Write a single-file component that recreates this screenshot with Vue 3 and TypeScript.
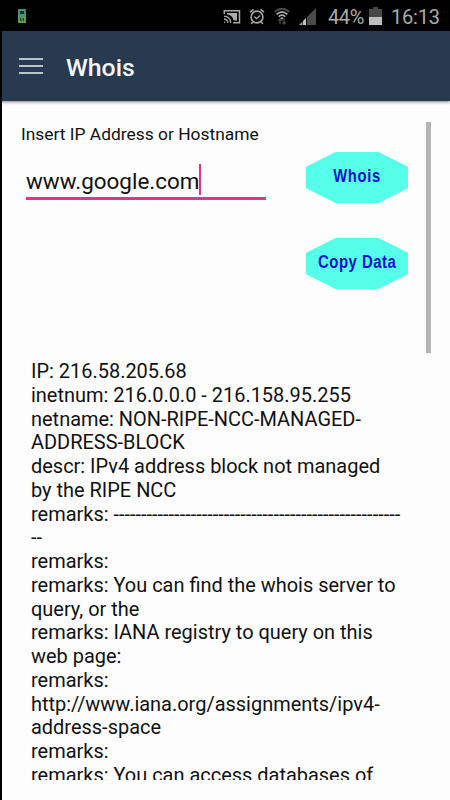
<script setup lang="ts">
import { ref } from "vue"

interface Action {
  label: string
  className: string
}

const host = ref("www.google.com")

const actions: Action[] = [
  { label: "Whois", className: "is-whois" },
  { label: "Copy Data", className: "is-copy" },
]

const lines: string[] = [
  "IP: 216.58.205.68",
  "inetnum: 216.0.0.0 - 216.158.95.255",
  "netname: NON-RIPE-NCC-MANAGED-",
  "ADDRESS-BLOCK",
  "descr: IPv4 address block not managed",
  "by the RIPE NCC",
  "remarks: " + "-".repeat(52),
  "--",
  "remarks:",
  "remarks: You can find the whois server to",
  "query, or the",
  "remarks: IANA registry to query on this",
  "web page:",
  "remarks:",
  "http://www.iana.org/assignments/ipv4-",
  "address-space",
  "remarks:",
  "remarks: You can access databases of",
]
</script>

<template>
  <div class="screen">
    <div class="status-bar">
      <svg class="notice-icon" viewBox="0 0 8 14" aria-hidden="true">
        <rect width="8" height="14" rx="0.5" fill="#419478" />
        <rect y="8" width="8" height="6" fill="#629a50" />
        <rect x="2" y="2" width="4" height="3" fill="#102e30" />
        <path d="M2 9h1.4v3H2zM4.6 9H6v3H4.6z" fill="#24451e" />
      </svg>
      <div class="status-icons">
        <svg class="cast-icon" viewBox="0 0 18 16" fill="none" stroke="#aaa" aria-hidden="true">
          <path d="M1.3 5V1.8h15.2v12H10" stroke-width="1.5" />
          <path d="M4 4h10v7.5h-3.5Q9.5 6 4 5.5z" fill="#aaa" stroke="none" />
          <path d="M1 7.2q6 .4 6.8 6.6M1 10q3.4.3 4 3.8" stroke-width="1.3" />
          <path d="M1 12.2l1.8 1.8H1z" fill="#aaa" stroke="none" />
        </svg>
        <svg class="alarm-icon" viewBox="0 0 16 17" fill="none" stroke="#a5a5a5" aria-hidden="true">
          <circle cx="8" cy="9" r="5.9" stroke-width="1.6" />
          <path d="M1 4.2L4.5 1.3M15 4.2l-3.5-2.9M3.8 13.8L2.2 16M12.2 13.8l1.6 2.2" stroke-width="1.5" />
          <path d="M5.2 8.6l2.3 2 3.7-3" stroke-width="1.3" />
        </svg>
        <svg class="wifi-icon" viewBox="0 0 16 18" fill="none" aria-hidden="true">
          <path d="M.7 4.8Q8-1.4 15.3 4.8" stroke="#4a4a4a" stroke-width="2" />
          <path d="M2.6 7.3Q8 2.4 13.4 7.3M4.7 9.6Q8 6.6 11.3 9.6" stroke="#b0b0b0" stroke-width="1.7" />
          <path d="M6.2 11Q8 9.6 9.8 11L8 12.8z" fill="#b0b0b0" />
          <path d="M6 17v-5M4.3 13.6L6 11.9l1.7 1.7M10 11.8v5M8.3 15.2L10 16.9l1.7-1.7" stroke="#484848" stroke-width="1.4" />
        </svg>
        <svg class="signal-icon" viewBox="0 0 17 17" aria-hidden="true">
          <path d="M17 0v17H8V9z" fill="#4a4a4a" />
          <path d="M7 10v7H4v-4z" fill="#c4c4c4" />
          <path d="M3.3 13.7V17H0z" fill="#aaa" />
        </svg>
        <span class="percent">44%</span>
        <svg class="battery-icon" viewBox="0 0 13 18" aria-hidden="true">
          <path d="M4 0h5v2h4v9H0V2h4z" fill="#484848" />
          <path d="M0 10h13v8H0z" fill="#bdbdbd" />
        </svg>
        <span class="clock">16:13</span>
      </div>
    </div>

    <header class="app-bar">
      <button class="menu" type="button" aria-label="Menu">
        <span /><span /><span />
      </button>
      <h1 class="title">Whois</h1>
    </header>

    <main class="content">
      <section class="query">
        <div class="field">
          <label class="field-label">Insert IP Address or Hostname</label>
          <div class="field-input">
            <span class="field-value">{{ host }}</span>
            <span class="caret" />
          </div>
        </div>
        <div class="actions">
          <button
            v-for="action in actions"
            :key="action.label"
            type="button"
            :class="['action', action.className]"
          >
            <span class="action-label">{{ action.label }}</span>
          </button>
        </div>
        <div class="scrollbar" />
      </section>

      <section class="result">
        <p v-for="(line, i) in lines" :key="i" class="result-line">{{ line }}</p>
      </section>
    </main>
  </div>
</template>

<style>
body {
  margin: 0;
  background: #000;
}
</style>

<style scoped>
.screen {
  box-sizing: border-box;
  display: flex;
  flex-direction: column;
  width: 450px;
  height: 800px;
  overflow: hidden;
  background: #fdfdfd;
  color: #111;
  font-family: Roboto, "Liberation Sans", sans-serif;
}
.status-bar {
  display: flex;
  flex-shrink: 0;
  justify-content: space-between;
  height: 31px;
  padding: 0 10px 0 18px;
  box-sizing: border-box;
  background: #000;
}
.notice-icon { width: 8px; height: 14px; margin-top: 9px; }
.status-icons {
  display: flex;
  align-items: flex-start;
  color: #aaa;
  font-size: 20px;
  line-height: 24px;
}
.cast-icon { width: 18px; height: 16px; margin: 9px 8px 0 0; }
.alarm-icon { width: 16px; height: 17px; margin: 8px 9px 0 0; }
.wifi-icon { width: 16px; height: 18px; margin: 7px 9px 0 0; }
.signal-icon { width: 17px; height: 17px; margin: 8px 12px 0 0; }
.percent { width: 37px; margin: 5px 4px 0 0; letter-spacing: -0.4px; white-space: nowrap; }
.battery-icon { width: 13px; height: 18px; margin: 7px 9px 0 0; }
.clock { width: 49px; margin-top: 5px; letter-spacing: -0.2px; white-space: nowrap; }
.app-bar {
  z-index: 1;
  display: flex;
  flex-shrink: 0;
  align-items: center;
  height: 70px;
  padding-left: 17px;
  box-sizing: border-box;
  border-left: 2px solid #000;
  background: #283a50;
  box-shadow: 0 1px 3px rgba(0, 0, 0, 0.5);
}
.menu {
  display: flex;
  flex-direction: column;
  gap: 5px;
  width: 24px;
  margin-right: 23px;
  padding: 0;
  border: 0;
  background: none;
}
.menu span { height: 2.3px; background: #b9c3c8; }
.title {
  margin: 3px 0 0;
  color: #f4f8fa;
  font-size: 24.8px;
  font-weight: 500;
  line-height: 30px;
}
.content {
  display: flex;
  flex: 1;
  flex-direction: column;
  min-height: 0;
  padding-bottom: 20px;
  border-left: 2px solid #000;
}
.query {
  display: flex;
  flex-shrink: 0;
  height: 231px;
  margin-top: 21px;
  padding-left: 19px;
}
.field { width: 285px; }
.field-label {
  display: block;
  margin-top: 2px;
  font-size: 17.4px;
  line-height: 20px;
  white-space: nowrap;
}
.field-input {
  display: flex;
  align-items: flex-start;
  width: 240px;
  height: 33px;
  margin: 20px 0 0 5px;
  border-bottom: 3px solid #e6308f;
}
.field-value { font-size: 22.45px; line-height: 35px; }
.caret { width: 2px; height: 31px; background: #e6308f; }
.actions {
  display: flex;
  flex-direction: column;
  gap: 35px;
  width: 120px;
  padding-top: 30px;
}
.action {
  width: 102px;
  height: 51px;
  padding: 0;
  border: 0;
  background: #56ffe9;
  clip-path: polygon(29% 0, 71% 0, 100% 29%, 100% 71%, 71% 100%, 29% 100%, 0 71%, 0 29%);
  color: #0a12cf;
  font-family: "Liberation Sans", Arial, sans-serif;
  font-size: 18px;
  font-weight: 700;
  line-height: 24px;
  white-space: nowrap;
}
.action-label { display: inline-block; padding-bottom: 4px; }
.is-whois .action-label { letter-spacing: 0.8px; transform: scaleX(0.82); }
.is-copy .action-label { letter-spacing: 0.6px; transform: scaleX(0.83); }
.scrollbar { width: 5px; background: #b5b5b5; }
.result {
  flex: 1;
  min-height: 0;
  margin-top: 7px;
  padding-left: 29px;
  overflow: hidden;
}
.result-line {
  height: 23.75px;
  margin: 0;
  font-size: 19.97px;
  line-height: 23.75px;
  white-space: pre;
}
</style>
